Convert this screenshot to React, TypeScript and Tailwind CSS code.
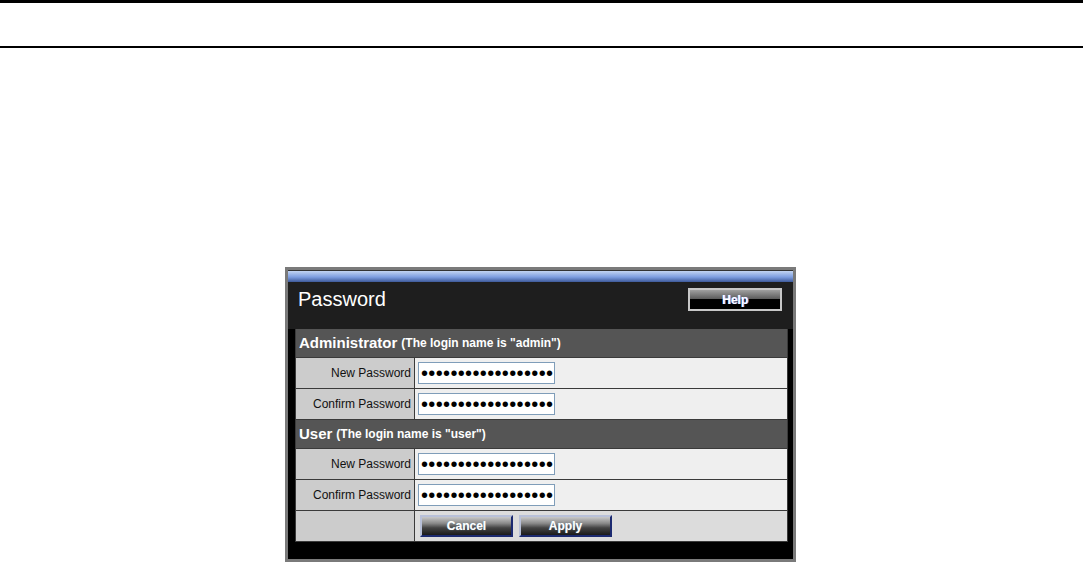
import React from "react";

const font = { fontFamily: '"Liberation Sans", Arial, sans-serif' };

function PwInput() {
  return (
    <div
      role="textbox"
      aria-label="password"
      className="flex h-[22px] w-[137px] items-center overflow-hidden whitespace-nowrap border border-[#7f9db9] bg-white pl-[2px] text-[20px] leading-none tracking-[0.35px] text-black"
      style={font}
    >
      {"••••••••••••••••••"}
    </div>
  );
}

function SectionHeader({ title, note }: { title: string; note: string }) {
  return (
    <div className="flex h-[29px] items-center border-b border-[#3a3a3a] bg-[#555555] pl-[3px] text-white">
      <span className="text-[15px] font-bold">{title}</span>
      <span className="ml-[4px] text-[12px] font-bold">{note}</span>
    </div>
  );
}

function FieldRow({ label }: { label: string }) {
  return (
    <div className="flex h-[31px] border-b border-[#3a3a3a]">
      <div className="flex w-[119px] items-center justify-end border-r border-[#3a3a3a] bg-[#cccccc] pr-[3px] text-[12px] text-[#111]">
        {label}
      </div>
      <div className="flex flex-1 items-center bg-[#efefef] pl-[3px]">
        <PwInput />
      </div>
    </div>
  );
}

function GradButton({ label }: { label: string }) {
  return (
    <button
      className="h-[22px] w-[93px] border-2 border-t-[#b8c0d8] border-l-[#b8c0d8] border-r-[#1c2a70] border-b-[#1c2a70] bg-[linear-gradient(to_bottom,#c8c8c8_0%,#8a8a8a_35%,#444_60%,#1a1a1a_100%)] text-[12px] font-bold leading-none text-white [text-shadow:0_0_1px_#8ab]"
      style={font}
    >
      {label}
    </button>
  );
}

export default function App() {
  return (
    <div className="relative h-[562px] w-full overflow-hidden bg-white" style={font}>
      <div className="h-[3px] w-full bg-black" />
      <div className="mt-[43px] h-[2px] w-full bg-black" />
      <div className="ml-[285px] mt-[219px] flex h-[295px] w-[511px] flex-col border-[3px] border-[#7a7a7a] bg-black">
        <div className="h-[1px] bg-[#333]" />
        <div className="h-[11px] bg-[linear-gradient(to_bottom,#c2d4f2_0%,#7e9ee0_55%,#3e5a9a_100%)]" />
        <div className="flex h-[47px] items-start justify-between bg-[#1e1e1e] pl-[10px] pr-[11px]">
          <div className="mt-[5px] text-[20px] leading-[24px] text-white">Password</div>
          <button className="mt-[6px] h-[23px] w-[94px] border-2 border-[#c8c8c8] bg-[linear-gradient(to_bottom,#a0a0a0_0%,#5a5a5a_48%,#000_50%,#000_100%)] text-[12px] font-bold leading-none text-white [text-shadow:1px_0_0_#8aa0ff]" style={font}>
            Help
          </button>
        </div>
        <div className="ml-[7px] mr-[5px] border-l border-r border-[#3a3a3a]">
          <SectionHeader title="Administrator" note={'(The login name is "admin")'} />
          <FieldRow label="New Password" />
          <FieldRow label="Confirm Password" />
          <SectionHeader title="User" note={'(The login name is "user")'} />
          <FieldRow label="New Password" />
          <FieldRow label="Confirm Password" />
          <div className="flex h-[31px] border-b border-[#3a3a3a]">
            <div className="w-[119px] border-r border-[#3a3a3a] bg-[#cccccc]" />
            <div className="flex flex-1 items-center gap-[6px] bg-[#dcdcdc] pl-[5px]">
              <GradButton label="Cancel" />
              <GradButton label="Apply" />
            </div>
          </div>
        </div>
      </div>
    </div>
  );
}
